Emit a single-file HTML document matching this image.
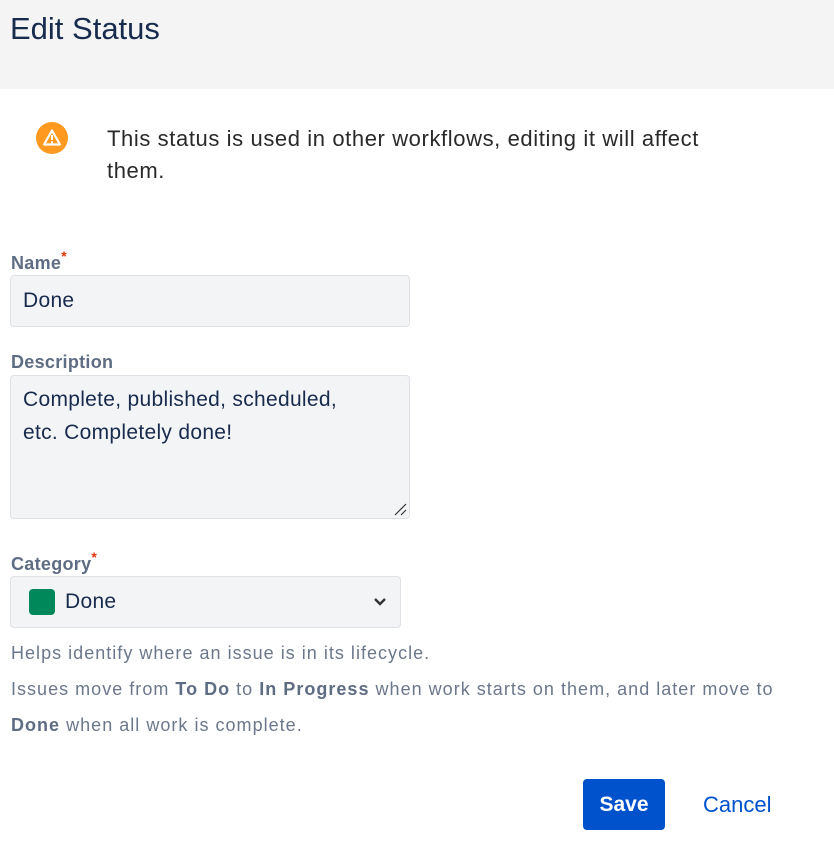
<!DOCTYPE html>
<html><head><style>
body{margin:0;width:834px;height:854px;background:#fff;font-family:"Liberation Sans",sans-serif;position:relative;overflow:hidden}
.hdr{position:absolute;left:0;top:0;width:834px;height:89px;background:#f4f4f4}
.hdr h1{position:absolute;left:10px;top:11px;margin:0;font-size:31px;font-weight:400;color:#172b4d}
.abs{position:absolute}
.lbl{font-size:18px;font-weight:700;color:#5e6c84;letter-spacing:0.3px}
.lbl sup{color:#de350b;font-size:14px;position:relative;top:-4px;vertical-align:top;line-height:1}
.box{position:absolute;background:#f3f4f6;border:1px solid #dfe1e6;border-radius:4px;box-sizing:border-box;color:#172b4d;font-size:21px;letter-spacing:0.3px}
.help{font-size:18px;color:#6b778c;letter-spacing:1.02px}
.help b{color:#5e6c84}
</style></head><body>
<div class="hdr"><h1>Edit Status</h1></div>
<svg class="abs" style="left:36px;top:122px" width="32" height="32" viewBox="0 0 32 32"><circle cx="16" cy="16" r="16" fill="#ff991f"/><path d="M16 8.5 L24 22.5 H8 Z" fill="none" stroke="#fff" stroke-width="2.2" stroke-linejoin="round"/><rect x="15" y="13" width="2" height="5" fill="#fff"/><rect x="15" y="19.3" width="2" height="2" fill="#fff"/></svg>
<div class="abs" style="left:107px;top:123px;width:640px;font-size:22px;letter-spacing:0.6px;line-height:32px;color:#292929">This status is used in other workflows, editing it will affect them.</div>
<div class="abs lbl" style="left:11px;top:253px">Name<sup>*</sup></div>
<div class="box" style="left:10px;top:275px;width:400px;height:52px;padding:13px 0 0 12px">Done</div>
<div class="abs lbl" style="left:11px;top:352px">Description</div>
<div class="box" style="left:10px;top:375px;width:400px;height:144px;padding:7px 40px 7px 12px;line-height:33px">Complete, published, scheduled, etc. Completely done!
<svg class="abs" style="right:2px;bottom:2px" width="14" height="14"><path d="M2 13L13 2M8 13L13 8" stroke="#333" stroke-width="1.2"/></svg></div>
<div class="abs lbl" style="left:11px;top:554px">Category<sup>*</sup></div>
<div class="box" style="left:10px;top:576px;width:391px;height:52px">
<div class="abs" style="left:18px;top:12px;width:26px;height:26px;background:#00875a;border-radius:4px"></div>
<div class="abs" style="left:54px;top:13px">Done</div>
<svg class="abs" style="left:362px;top:20px" width="14" height="10"><path d="M2 2L7 7L12 2" fill="none" stroke="#333" stroke-width="2.4"/></svg></div>
<div class="abs help" style="left:11px;top:635px;line-height:36px;width:820px">Helps identify where an issue is in its lifecycle.<br>Issues move from <b>To Do</b> to <b>In Progress</b> when work starts on them, and later move to<br><b>Done</b> when all work is complete.</div>
<div class="abs" style="left:583px;top:779px;width:82px;height:51px;background:#0052cc;border-radius:4px;color:#fff;font-size:21px;font-weight:700;text-align:center;line-height:51px">Save</div>
<div class="abs" style="left:703px;top:792px;color:#0052cc;font-size:22px">Cancel</div>
</body></html>
